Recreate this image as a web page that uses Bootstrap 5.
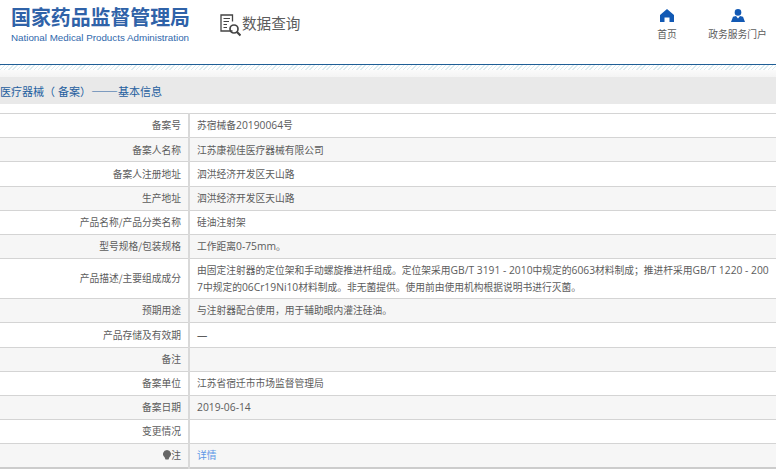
<!DOCTYPE html>
<html lang="zh-CN">
<head>
  <meta charset="UTF-8">
  <meta name="viewport" content="width=device-width, initial-scale=1.0">
  <title>数据查询</title>
  <link rel="stylesheet" href="https://cdn.jsdelivr.net/npm/bootstrap@5.3.0/dist/css/bootstrap.min.css">
  <style>
    body { font-family: "Liberation Sans", "Noto Sans CJK SC", sans-serif; font-size: 9.75px; color: #555; overflow: hidden; background: #fff; }
    .site-header { height: 64px; padding-left: 11px; }
    .brand { width: 178px; padding-top: 5px; }
    .brand-cn { font-family: "Noto Sans CJK SC", sans-serif; font-size: 19.9px; font-weight: 700; line-height: 24px; color: #2f62a8; white-space: nowrap; }
    .brand-en { font-size: 9.8px; line-height: 12px; margin-top: 3px; color: #2f68ac; white-space: nowrap; }
    .query { margin-left: 31px; padding-top: 13px; font-family: "Noto Sans CJK SC", sans-serif; font-size: 14.6px; line-height: 20px; color: #5c5c5c; }
    .query svg { display: block; margin-right: 1px; }
    .top-links { margin-left: auto; padding-top: 9px; padding-right: 9px; gap: 31px; }
    .top-links a { color: #5c5c5c; text-decoration: none; line-height: 14px; width: 59px; font-family: "Noto Sans CJK SC", sans-serif; }
    .top-links a.short { width: 20px; }
    .top-links svg { display: block; height: 13px; width: 14px; margin: 0 auto 5px; }
    .rule { height: 13px; border-top: 1px solid #1f5e96; background: repeating-linear-gradient(135deg, #dcecf0 0, #dcecf0 1px, #fff 1px, #fff 3px) top / 100% 5px no-repeat, linear-gradient(#fff, #f4f4f4); }
    .page-title { height: 27px; line-height: 27px; background: #e9e9e9; color: #1f5f9f; font-family: "Noto Sans CJK SC", sans-serif; font-size: 11px; margin-bottom: 9px; white-space: nowrap; }
    .page-title .open { letter-spacing: 3px; }
    .page-title .dash { font-size: 13.5px; }
    .info { table-layout: fixed; width: 776px; margin: 0; border-top: 1px solid #d4d4d4; border-bottom: 2px solid #ccc; font-family: "Noto Sans CJK SC", sans-serif; }
    .info td { padding: 0 7px; height: 24.2px; line-height: 16.5px; font-size: 9.75px; color: #5c5c5c; border-bottom: 1px solid #d4d4d4; vertical-align: middle; background: #fff; }
    .info tr:nth-child(even) td { background: #f6f6f6; }
    .info tr:last-child td { border-bottom: 0; }
    .info .key { width: 189px; text-align: right; border-right: 2px solid #d9d9d9; padding-right: 7px; }
    .info .val { padding-left: 7px; padding-right: 2px; }
    .info .tall td { height: 40px; }
    .info a { color: #5c97e6; text-decoration: none; }
    .info svg { vertical-align: -1px; }
    .num { font-family: "Open Sans", sans-serif; font-size: 10.3px; }
  </style>
</head>
<body>
  <div class="site-header d-flex">
    <div class="brand">
      <div class="brand-cn">国家药品监督管理局</div>
      <div class="brand-en">National Medical Products Administration</div>
    </div>
    <div class="query d-flex align-items-start">
      <svg width="21" height="24" viewBox="0 0 21 24" fill="none" stroke="#444" stroke-width="1.3">
        <path d="M12.5 18H1V2H12.5V8.5"/>
        <path d="M3.5 5.5H10M3.5 8.5H9M3.5 11.5H7M3.5 14.5H7" stroke-width="1"/>
        <circle cx="14" cy="16" r="4" stroke-width="1.7"/>
        <path d="M17 19L20.5 22.5" stroke-width="2.2"/>
      </svg>
      <span>数据查询</span>
    </div>
    <div class="top-links d-flex text-center">
      <a class="short" href="#">
        <svg viewBox="0 0 14 13"><path fill="#1259b4" d="M7 0L14 6V13H9.5V8.5H4.5V13H0V6Z"/></svg>
        首页
      </a>
      <a href="#">
        <svg viewBox="0 0 14 13"><circle cx="7" cy="3.4" r="3.3" fill="#1259b4"/><path fill="#1259b4" d="M0 13L2 7.8 5 6.9 7 9.4 9 6.9 12 7.8 14 13Z"/></svg>
        政务服务门户
      </a>
    </div>
  </div>
  <div class="rule"></div>
  <div class="page-title">医疗器械<span class="open">（</span>备案）<span class="dash">——</span>基本信息</div>

  <table class="info">
    <tbody>
      <tr><td class="key">备案号</td><td class="val">苏宿械备<span class="num">20190064</span>号</td></tr>
      <tr><td class="key">备案人名称</td><td class="val">江苏康视佳医疗器械有限公司</td></tr>
      <tr><td class="key">备案人注册地址</td><td class="val">泗洪经济开发区天山路</td></tr>
      <tr><td class="key">生产地址</td><td class="val">泗洪经济开发区天山路</td></tr>
      <tr><td class="key">产品名称/产品分类名称</td><td class="val">硅油注射架</td></tr>
      <tr><td class="key">型号规格/包装规格</td><td class="val">工作距离<span class="num">0-75mm</span>。</td></tr>
      <tr class="tall"><td class="key">产品描述/主要组成成分</td><td class="val">由固定注射器的定位架和手动螺旋推进杆组成。定位架采用<span class="num">GB/T 3191 - 2010</span>中规定的<span class="num">6063</span>材料制成；推进杆采用<span class="num">GB/T 1220 - 200</span><br><span class="num">7</span>中规定的<span class="num">06Cr19Ni10</span>材料制成。非无菌提供。使用前由使用机构根据说明书进行灭菌。</td></tr>
      <tr><td class="key">预期用途</td><td class="val">与注射器配合使用，用于辅助眼内灌注硅油。</td></tr>
      <tr><td class="key">产品存储及有效期</td><td class="val"><span class="num">—</span></td></tr>
      <tr><td class="key">备注</td><td class="val"></td></tr>
      <tr><td class="key">备案单位</td><td class="val">江苏省宿迁市市场监督管理局</td></tr>
      <tr><td class="key">备案日期</td><td class="val"><span class="num">2019-06-14</span></td></tr>
      <tr><td class="key">变更情况</td><td class="val"></td></tr>
      <tr><td class="key"><svg width="8" height="10" viewBox="0 0 8 10"><path fill="#666" d="M4 0a4 4 0 0 1 2.4 7.2L5.5 9.5h-3L1.6 7.2A4 4 0 0 1 4 0Z"/></svg>注</td><td class="val"><a href="#">详情</a></td></tr>
    </tbody>
  </table>

  <script src="https://cdn.jsdelivr.net/npm/bootstrap@5.3.0/dist/js/bootstrap.bundle.min.js"></script>
</body>
</html>
